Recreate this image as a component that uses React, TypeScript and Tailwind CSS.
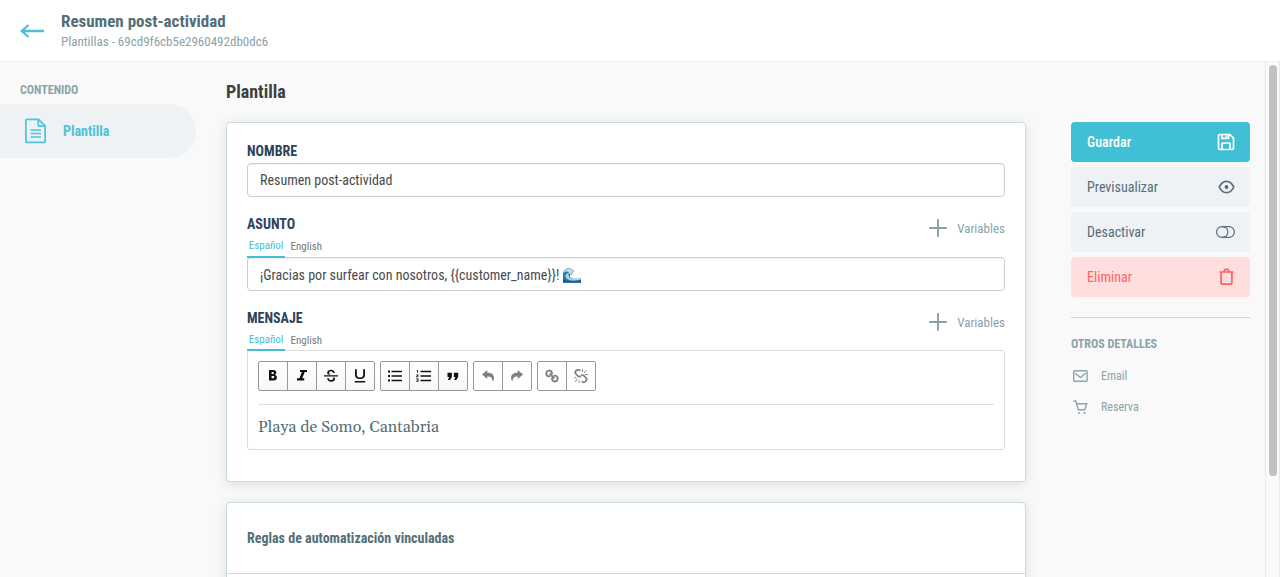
import type { ReactNode } from 'react';

const COND = "font-['Roboto_Condensed','Roboto',sans-serif] [font-stretch:75%]";

function BackIcon() {
  return (
    <svg width="25" height="16" viewBox="0 0 25 16" fill="none" stroke="#4cc1d6" strokeWidth="2.3">
      <path d="M24 8H1.800M8.500 2L1.800 8l6.700 6" />
    </svg>
  );
}

function DocIcon() {
  return (
    <svg width="22" height="26" viewBox="0 0 22 26" fill="none" stroke="#4fc3d7" strokeWidth="1.7">
      <path d="M1.900 1.300h11.600l6.600 6.600v15.400q0 1-1 1H1.900q-1 0-1-1V2.300q0-1 1-1z" />
      <path d="M13.300 1.500v5.700q0 1 1 1h5.700M5.500 12h10.500M5.500 15.500h10.500M5.500 19h10.500" />
    </svg>
  );
}

function PlusIcon() {
  return (
    <svg width="18" height="18" viewBox="0 0 18 18" fill="none" stroke="#88a1a7" strokeWidth="1.900" strokeLinecap="round">
      <path d="M9 .9v16.2M.9 9h16.2" />
    </svg>
  );
}

function Field({ label, top, children }: { label: string; top?: ReactNode; children: ReactNode }) {
  return (
    <div>
      <div className="flex h-5 justify-between">
        <div className="text-sm leading-5 font-bold text-[#2f425a]">{label}</div>
        {top}
      </div>
      {children}
    </div>
  );
}

function Variables() {
  return (
    <button className="mt-[5px] flex h-[18px] items-center gap-2.5 text-[13px] text-[#8aa2a8]">
      <PlusIcon />
      <span className="pt-px">Variables</span>
    </button>
  );
}

function LangTabs({ compact }: { compact?: boolean }) {
  return (
    <div className={'flex text-[11px] leading-4 ' + (compact ? 'h-[22px]' : 'h-[23px]')}>
      <span
        className={
          'relative z-10 w-[38px] border-b-2 border-[#43bfd3] pt-[4px] text-center text-[#43bfd3] ' +
          (compact ? 'h-[23px]' : 'h-[24px]')
        }
      >
        Español
      </span>
      <span className="ml-[5.500px] pt-[5px] text-[#777]">English</span>
    </div>
  );
}

function TextBox({ children }: { children: ReactNode }) {
  return (
    <div className="flex h-[34px] items-center rounded-[4px] border border-[#c5d0d9] bg-white px-3 text-sm text-[#4a4a4a] shadow-[inset_0_1px_1px_rgba(0,0,0,0.06)]">
      {children}
    </div>
  );
}

function Wave() {
  return (
    <svg width="18" height="15" viewBox="0 0 18 15">
      <path d="M0 14.500V5Q1.500.5 6 .3q4 .2 5.500 3.700l-2-.8 1 2.300-2-.7.800 2-1.800-.6q-1.500 2.500 1 4 3.500 1 9.500 0v4.300z" fill="#2b78ac" />
      <path d="M.5 5Q2 .8 6 .5q4 .2 5.300 3.300l-2-.6.800 2-2-.5.500 1.800-2.100-.7Q5.500 3 3.500 3.500T.5 5z" fill="#bddfe8" />
      <path d="M2 8q1.500-3 4-3.500-1.500 4.500 2.500 6.200 4 1 9-.7v1.700q-7 1.500-10.500.6T2 8z" fill="#a5d5e2" />
      <path d="M0 10.500q3 2.500 8 2.500t10-.4v2.200H0z" fill="#1c5b91" />
    </svg>
  );
}

const GROUPS: { disabled?: boolean; icons: ReactNode[] }[] = [
  {
    icons: [
      <path d="M6 4h4.300q3 0 3 2.600 0 1.500-1.300 2.200 1.900.7 1.900 2.700 0 2.900-3.200 2.900H6zm2.600 2.100v1.900h1.300q1 0 1-.95 0-.95-1-.95zm0 3.900v2.200h1.600q1.100 0 1.100-1.100T10.200 10z" fillRule="evenodd" />,
      <path d="M8 4h7v2.100h-2.300l-2.400 6.200h1.900v2.100H5v-2.100h2.500l2.400-6.200H8z" />,
      <path d="M3 9.300h14v1.300H3zM13.800 7h-1.700c0-1-.8-1.800-2.100-1.800-1.400 0-2 .7-2 1.500 0 .6.4 1 1 1.400l.8.4H6.900C6.400 8 6.200 7.400 6.200 6.700c0-1.900 1.700-3 3.800-3 2.300 0 3.800 1.300 3.800 3.300zM6.200 12.200h1.700c0 1.200.9 1.900 2.300 1.900 1.300 0 2-.6 2-1.500 0-.5-.2-.9-.6-1.200h2c.3.4.4.9.4 1.400 0 1.900-1.600 2.900-3.800 2.900-2.400 0-4-1.400-4-3.500z" />,
      <path d="M5 3.300h1.800v5.200q0 3 3.200 3t3.200-3V3.300H15v5.200q0 4.600-5 4.600t-5-4.600zM4.800 15h10.400v1.500H4.800z" />,
    ],
  },
  {
    icons: [
      <path d="M3 4.500h2v2H3zm0 4.500h2v2H3zm0 4.500h2v2H3zM6.500 4.700H17v1.600H6.500zm0 4.500H17v1.600H6.500zm0 4.500H17v1.600H6.500z" />,
      <path d="M6.500 4.700H17v1.600H6.500zm0 4.500H17v1.600H6.500zm0 4.500H17v1.600H6.500zM2.600 4h1.500v3h-.8V4.600h-.7zm-.4 4.500h2.300v.8L3.300 10.600h1.200v.7H2.200v-.7l1.200-1.300H2.200zm0 4h2.300v3.300H2.200v-.7h1.500v-.5H2.800V14h.9v-.6H2.200z" />,
      <path d="M4.500 6.700h4.400v4.400L7 14H4.900l1.200-2.900H4.500zm6.300 0h4.400v4.400L13.300 14h-2.100l1.200-2.900h-1.600z" />,
    ],
  },
  {
    disabled: true,
    icons: [
      <path d="M4 8.500L9.200 4v2.500q6.800.3 6.800 5.400 0 2-1.500 3.700.1-5.500-5.300-5.200v2.600z" />,
      <path d="M16 8.500L10.800 4v2.500Q4 6.800 4 11.900q0 2 1.500 3.700-.1-5.500 5.300-5.200v2.600z" />,
    ],
  },
  {
    disabled: true,
    icons: [
      <g fill="none" stroke="currentColor" strokeWidth="1.900">
        <path d="M8.300 10.100a2.900 2.900 0 1 1 1.700-2.900l-.2 1.200M11.700 9.900a2.900 2.900 0 1 1-1.700 2.900l.2-1.200M7.600 7.600l4.800 4.800" />
      </g>,
      <g fill="none" stroke="currentColor" strokeWidth="1.700">
        <path d="M9.500 4.800L8.100 4Q6.400 3.300 5 4.700 3.500 6.300 4.800 7.900l2.600 2.500q1.300.7 2.400-.1M10.800 15.200q1.400 1.700 3 .8 2.700-1.300 1.500-3.800l-2.700-2.700q-1.300-.9-2.700.1" />
        <path strokeWidth=".9" d="M11.500 6V3M13 7l2.500-3M14 8.500h3M8 14.500V17M6.500 13L4 16M5.500 11.800H3" />
      </g>,
    ],
  },
];

function Toolbar() {
  return (
    <div className="flex gap-[5px]">
      {GROUPS.map((group, i) => (
        <div
          key={i}
          className={
            'flex h-[30px] divide-x divide-[#999] rounded-[2px] border border-[#999] ' +
            (group.disabled ? 'bg-white text-[#808080]' : 'bg-linear-to-b from-white to-[#f6f7f8] text-[#111]')
          }
        >
          {group.icons.map((icon, j) => (
            <button key={j} className="flex w-[29px] items-center justify-center last:w-[28px]">
              <svg width="20" height="20" viewBox="0 0 20 20" fill="currentColor">
                {icon}
              </svg>
            </button>
          ))}
        </div>
      ))}
    </div>
  );
}

const ACTIONS = [
  {
    label: 'Guardar',
    className: 'bg-[#41bfd4] text-white font-medium',
    icon: (
      <svg width="18" height="18" viewBox="0 0 18 18" fill="none" stroke="currentColor" strokeWidth="1.700">
        <path d="M3 1.500h9.700l3.800 3.600V15q0 1.500-1.500 1.500H3Q1.500 16.500 1.500 15V3Q1.500 1.500 3 1.500zM5 1.500v3.800h6.500V1.500M5 16.500v-5.700q0-.8.8-.8h6.400q.8 0 .8.800v5.700M9.300 2.500v1.800" />
      </svg>
    ),
  },
  {
    label: 'Previsualizar',
    className: 'bg-[#eef2f5] text-[#546e77]',
    icon: (
      <svg width="17" height="14" viewBox="0 0 17 14" fill="none" stroke="currentColor" strokeWidth="1.700">
        <path d="M1.200 7Q4 1.300 8.500 1.300T15.800 7Q13 12.700 8.500 12.700T1.200 7z" />
        <circle cx="8.500" cy="7" r="1.900" fill="currentColor" stroke="none" />
      </svg>
    ),
  },
  {
    label: 'Desactivar',
    className: 'bg-[#eef2f5] text-[#546e77]',
    icon: (
      <svg width="19" height="12" viewBox="0 0 19 12" fill="none" stroke="currentColor" strokeWidth="1.200">
        <rect x=".6" y=".6" width="17.800" height="10.800" rx="5.400" />
        <path d="M6.500.6a5.400 5.400 0 0 1 0 10.800" />
      </svg>
    ),
  },
  {
    label: 'Eliminar',
    className: 'bg-[#ffdede] text-[#ff6262]',
    icon: (
      <svg className="mr-px" width="15" height="18" viewBox="0 0 15 18" fill="none" stroke="currentColor" strokeWidth="1.700">
        <path d="M.5 4h14M4.900 3.800l.7-1.700q.3-.7 1-.7h1.800q.7 0 1 .7l.7 1.700M2.100 4v11q0 1.200 1.200 1.200h8.400q1.200 0 1.200-1.200V4" />
      </svg>
    ),
  },
];

function MailIcon() {
  return (
    <svg width="15" height="12" viewBox="0 0 15 12" fill="none" stroke="#88a7ab" strokeWidth="1.400">
      <rect x=".7" y=".7" width="13.400" height="10.600" rx="1" />
      <path d="M2 3l5.400 4.500L12.800 3" />
    </svg>
  );
}

function CartIcon() {
  return (
    <svg width="15" height="15" viewBox="0 0 15 15" fill="none" stroke="#88a7ab" strokeWidth="1.400">
      <path d="M.3 1h2.500l2.500 8.700h6.400l2-6H3.600" />
      <circle cx="6" cy="13" r="1.100" fill="#88a7ab" stroke="none" />
      <circle cx="11.500" cy="13" r="1.100" fill="#88a7ab" stroke="none" />
    </svg>
  );
}

const CARD = 'rounded-[4px] border border-[#cdd9e3] bg-white shadow-[0_2px_12px_rgba(60,90,90,0.16)]';

export default function App() {
  return (
    <div className={`flex h-[577px] w-[1280px] flex-col overflow-hidden bg-[#f9f9f9] ${COND}`}>
      <header className="flex h-[62px] shrink-0 items-center border-b border-[#eeeeee] bg-white pl-5">
        <BackIcon />
        <div className="ml-4 pt-px">
          <h1 className="text-[17px] leading-5 font-bold text-[#546e77]">Resumen post-actividad</h1>
          <p className="pt-px text-[13px] leading-5 text-[#8aa2a8]">Plantillas - 69cd9f6cb5e2960492db0dc6</p>
        </div>
      </header>
      <div className="flex min-h-0 flex-1">
        <aside className="w-[196px] shrink-0">
          <div className="pt-[18px] pl-5 text-xs leading-5 font-bold text-[#8aa4a8]">CONTENIDO</div>
          <div className="mt-1 flex h-[54px] items-center gap-4 rounded-r-full bg-[#eef2f5] pl-[25px] text-sm font-bold text-[#4fc3d7]">
            <DocIcon />
            <span>Plantilla</span>
          </div>
        </aside>
        <main className="ml-[30px] w-[800px] shrink-0">
          <h2 className="pt-[18px] text-lg leading-6 font-bold text-[#3f3f3f]">Plantilla</h2>
          <section className={`mt-[18px] h-[360px] px-5 pt-[18px] ${CARD}`}>
            <Field label="NOMBRE">
              <div className="mt-[2px]">
                <TextBox>Resumen post-actividad</TextBox>
              </div>
            </Field>
            <div className="mt-[17px]">
              <Field label="ASUNTO" top={<Variables />}>
                <LangTabs />
                <TextBox>
                  <span className="flex items-center gap-1 pt-0.5">
                    <span>¡Gracias por surfear con nosotros, {'{{customer_name}}'}!</span>
                    <Wave />
                  </span>
                </TextBox>
              </Field>
            </div>
            <div className="mt-[17px]">
              <Field label="MENSAJE" top={<Variables />}>
                <LangTabs compact />
                <div className="h-[100px] rounded-[3px] border border-[#dcdcdc] px-2.5 pt-2.5">
                  <Toolbar />
                  <div className="mt-[13px] border-t border-[#dcdcdc] pt-[10px] font-['Georgia','Gelasio','Liberation_Serif',serif] text-[16px] leading-6 text-[#546e77] [font-stretch:100%]">
                    Playa de Somo, Cantabria
                  </div>
                </div>
              </Field>
            </div>
          </section>
          <section className={`mt-5 h-[120px] ${CARD}`}>
            <h3 className="flex h-[71px] items-center border-b border-[#cdd9e3] px-5 text-sm font-bold text-[#546e77]">
              Reglas de automatización vinculadas
            </h3>
          </section>
        </main>
        <aside className="mt-[60px] ml-[45px] w-[179px] shrink-0">
          <div className="flex flex-col gap-[5px]">
            {ACTIONS.map((a) => (
              <button key={a.label} className={`flex h-10 items-center justify-between rounded-[4px] pr-[15px] pl-4 text-sm ${a.className}`}>
                <span>{a.label}</span>
                {a.icon}
              </button>
            ))}
          </div>
          <div className="mt-5 border-t border-[#ccd6df] pt-4 text-xs leading-5 font-bold text-[#8aa4a8]">OTROS DETALLES</div>
          <div className="mt-[12px] flex h-5 items-center gap-[13px] pl-[2px] text-xs text-[#8aa4a8]">
            <MailIcon />
            <span>Email</span>
          </div>
          <div className="mt-[11px] flex h-5 items-center gap-[13px] pl-[2px] text-xs text-[#8aa4a8]">
            <CartIcon />
            <span>Reserva</span>
          </div>
        </aside>
        <div className="ml-auto w-[15px] border-x border-[#e8e8e8] bg-[#fafafa] pt-[3px] pl-[3px]">
          <div className="h-[411px] w-2 rounded-full bg-[#c1c1c1]" />
        </div>
      </div>
    </div>
  );
}
